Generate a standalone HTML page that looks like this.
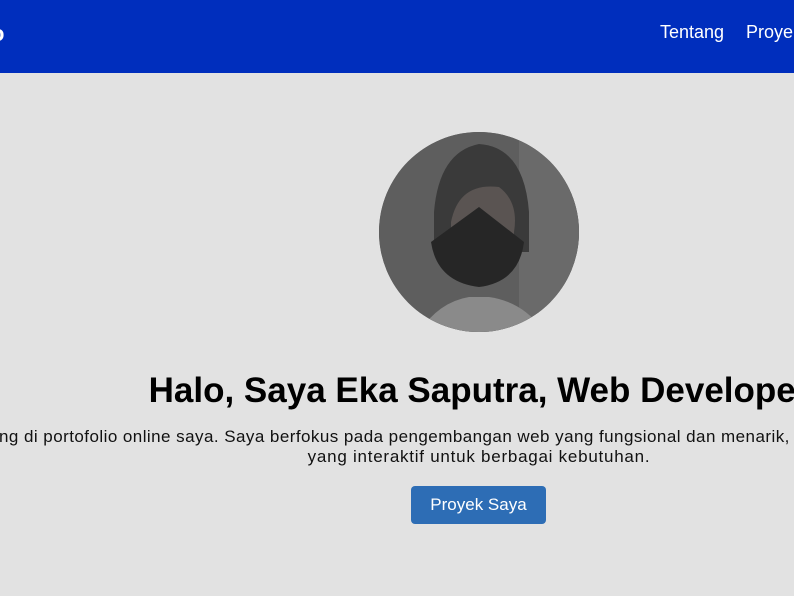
<!DOCTYPE html>
<html><head><meta charset="utf-8"><style>
html,body{margin:0;padding:0;width:794px;height:596px;overflow:hidden;background:#e2e2e2;font-family:"Liberation Sans",sans-serif}
.hdr{position:absolute;left:0;top:0;width:794px;height:73px;background:#002ebd;overflow:hidden}
.logo{position:absolute;left:-9px;top:21px;color:#fff;font-weight:bold;font-size:22px}
.nav{position:absolute;top:22px;color:#fff;font-size:18px}
.w{position:absolute;left:0;width:958px;text-align:center}
.av{position:absolute;left:379px;top:132px;width:200px;height:200px;border-radius:50%;overflow:hidden;background:#5c5c5c}
h1{margin:0;font-size:35px;font-weight:bold;color:#000;white-space:nowrap}
p{margin:0;font-size:17px;letter-spacing:0.75px;line-height:20px;color:#111;white-space:nowrap}
.l1{position:absolute;left:-1px;top:427px;letter-spacing:0.45px}
.btn{position:absolute;left:411px;top:486px;width:135px;height:38px;background:#2d6db5;border-radius:4px;color:#fff;font-size:17px;line-height:38px;text-align:center}
</style></head><body>
<div class="hdr">
<div class="logo">o</div>
<div class="nav" style="left:660px">Tentang</div>
<div class="nav" style="left:746px">Proyek</div>
</div>
<div class="av">
<svg width="200" height="200" viewBox="0 0 200 200">
<rect width="200" height="200" fill="#5e5e5e"/>
<rect x="140" y="0" width="60" height="200" fill="#6a6a6a"/>
<path d="M55 80 Q60 20 100 12 Q145 15 150 80 L150 120 L55 120Z" fill="#3a3a3a"/>
<path d="M72 90 Q80 50 120 55 Q140 70 135 100 L135 130 L72 130Z" fill="#5a5452"/>
<path d="M52 110 L100 75 L145 110 Q140 150 100 155 Q58 150 52 110Z" fill="#262626"/>
<path d="M40 200 Q60 170 90 165 L110 165 Q145 170 165 200Z" fill="#8a8a8a"/>
</svg>
</div>
<div class="w" style="top:371px"><h1>Halo, Saya Eka Saputra, Web Developer</h1></div>
<p class="l1">ng di portofolio online saya. Saya berfokus pada pengembangan web yang fungsional dan menarik, serta</p>
<div class="w" style="top:447px"><p>yang interaktif untuk berbagai kebutuhan.</p></div>
<div class="btn">Proyek Saya</div>
</body></html>
